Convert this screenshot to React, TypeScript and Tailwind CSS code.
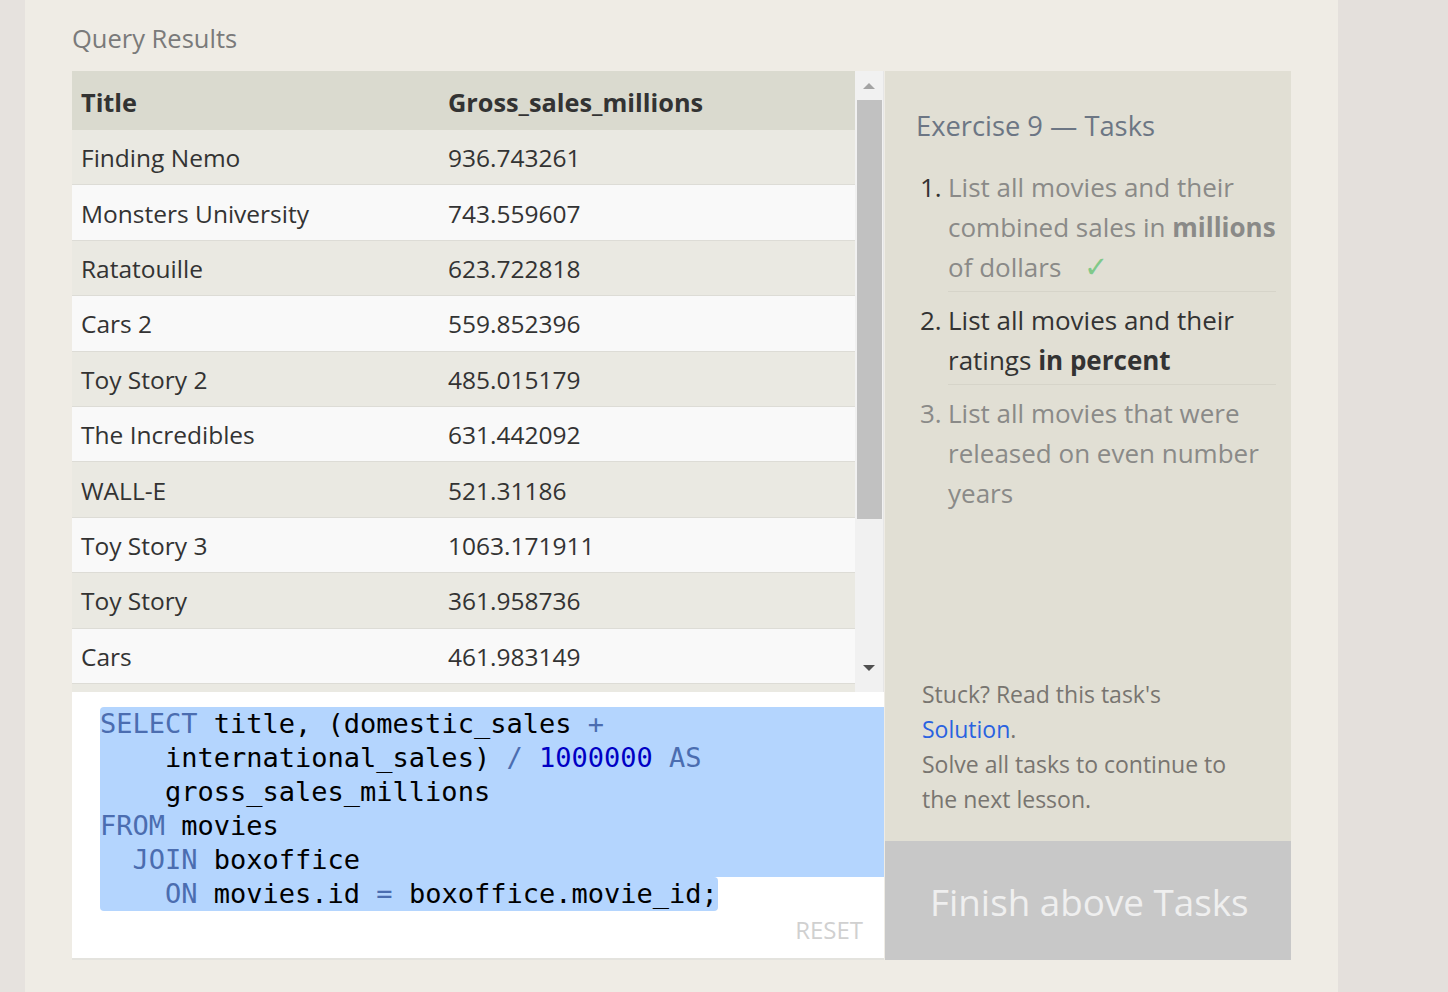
import React from "react";

const rows = [
  ["Finding Nemo", "936.743261"],
  ["Monsters University", "743.559607"],
  ["Ratatouille", "623.722818"],
  ["Cars 2", "559.852396"],
  ["Toy Story 2", "485.015179"],
  ["The Incredibles", "631.442092"],
  ["WALL-E", "521.31186"],
  ["Toy Story 3", "1063.171911"],
  ["Toy Story", "361.958736"],
  ["Cars", "461.983149"],
  ["A Bug's Life", "363.398565"],
];

const kw = "text-[#4b6db0]";

export default function App() {
  return (
    <div className="flex min-h-[992px] bg-[#e4e0dc] font-['Open_Sans',sans-serif]">
      <div className="w-[25px] bg-[#e6e2de]" />
      <div className="w-[1313px] bg-[#efece5] pl-[47px] pt-[20px]">
        <h2 className="text-[25.5px] leading-[36px] text-[#7a7a7a] mb-[15px]">Query Results</h2>

        <div className="flex">
          {/* left column: results + editor */}
          <div className="w-[812px] flex flex-col">
            <div className="h-[621px] flex overflow-hidden">
              <div className="w-[783px] overflow-hidden text-[24.5px] text-[#333]">
                <div className="flex h-[59px] items-center pt-[4px] bg-[#dadacf] font-bold text-[25.3px]">
                  <div className="w-[376px] pl-[9px]">Title</div>
                  <div className="flex-1">Gross_sales_millions</div>
                </div>
                {rows.map((r, i) => (
                  <div
                    key={i}
                    className={
                      "flex h-[55.4px] items-center pt-[3px] border-b border-[#dddcd6] " +
                      (i % 2 === 0 ? "bg-[#eae9e2]" : "bg-[#f9f9f9]")
                    }
                  >
                    <div className="w-[376px] pl-[9px]">{r[0]}</div>
                    <div className="flex-1">{r[1]}</div>
                  </div>
                ))}
              </div>
              <div className="w-[29px] bg-[#f1f1f1] flex flex-col items-center border-r border-[#e6e6e6]">
                <div className="h-[29px] flex items-center justify-center">
                  <div className="w-0 h-0 border-l-[6px] border-r-[6px] border-b-[6px] border-l-transparent border-r-transparent border-b-[#a3a3a3]" />
                </div>
                <div className="w-[25px] h-[419px] bg-[#c1c1c1]" />
                <div className="flex-1" />
                <div className="h-[29px] flex items-start justify-center pt-[2px]">
                  <div className="w-0 h-0 border-l-[6px] border-r-[6px] border-t-[6px] border-l-transparent border-r-transparent border-t-[#505050]" />
                </div>
              </div>
            </div>

            <div className="h-[268px] bg-white border-b-2 border-[#e4e3de] pt-[15px] pl-[28px] font-['DejaVu_Sans_Mono',monospace] text-[27px] leading-[34px] text-black whitespace-pre">
              <div className="bg-[#b4d5fe] rounded-tl-[4px]">
                <span className={kw}>SELECT</span> title, (domestic_sales <span className={kw}>+</span>
              </div>
              <div className="bg-[#b4d5fe]">
                {"    "}international_sales) <span className={kw}>/</span> <span className="text-[#0000c4]">1000000</span> <span className={kw}>AS</span>
              </div>
              <div className="bg-[#b4d5fe]">{"    "}gross_sales_millions</div>
              <div className="bg-[#b4d5fe]">
                <span className={kw}>FROM</span> movies
              </div>
              <div className="bg-[#b4d5fe]">
                {"  "}<span className={kw}>JOIN</span> boxoffice
              </div>
              <div>
                <span className="inline-block bg-[#b4d5fe] rounded-b-[4px] rounded-tr-[4px]">
                  {"    "}<span className={kw}>ON</span> movies.id <span className={kw}>=</span> boxoffice.movie_id;
                </span>
              </div>
              <div className="flex justify-end pr-[21px] mt-[6px] font-['Open_Sans',sans-serif] text-[24px] leading-[26px] text-[#d0d0d0]">
                RESET
              </div>
            </div>
          </div>

          {/* right column: tasks */}
          <div className="w-[406px] h-[889px] ml-[1px] bg-[#e1dfd4] flex flex-col">
            <div className="flex-1 pl-[31px] pr-[15px] pt-[35px]">
              <h3 className="text-[27.3px] leading-[40px] text-[#6c7684]">Exercise 9 — Tasks</h3>
              <ol className="mt-[13px] pl-[4px] text-[26px] leading-[40px] whitespace-nowrap">
                <li className="flex">
                  <span className="w-[28px] pt-[8px] text-[#333]">1.</span>
                  <div className="flex-1 pt-[8px] pb-[4px] border-b border-[#d6d4c9] text-[#8a8a88]">
                    List all movies and their
                    <br />
                    combined sales in <b>millions</b>
                    <br />
                    of dollars <span className="ml-[16px] text-[29px] leading-none text-[#80c98a]">✓</span>
                  </div>
                </li>
                <li className="flex">
                  <span className="w-[28px] pt-[8px] text-[#333]">2.</span>
                  <div className="flex-1 pt-[8px] pb-[4px] border-b border-[#d6d4c9] text-[#333]">
                    List all movies and their
                    <br />
                    ratings <b>in percent</b>
                  </div>
                </li>
                <li className="flex text-[#8a8a88]">
                  <span className="w-[28px] pt-[8px]">3.</span>
                  <div className="flex-1 pt-[8px] pb-[4px]">
                    List all movies that were
                    <br />
                    released on even number
                    <br />
                    years
                  </div>
                </li>
              </ol>
            </div>
            <div className="pl-[37px] pb-[24px] text-[23px] leading-[35px] text-[#787570]">
              <p>Stuck? Read this task's</p>
              <p>
                <span className="text-[#2a62e0]">Solution</span>.
              </p>
              <p>Solve all tasks to continue to</p>
              <p>the next lesson.</p>
            </div>
            <div className="h-[119px] bg-[#c8c8c8] flex items-center pl-[45px] pt-[4px] text-[36.8px] text-[#efefef]">
              Finish above Tasks
            </div>
          </div>
        </div>
      </div>
      <div className="flex-1" />
    </div>
  );
}
